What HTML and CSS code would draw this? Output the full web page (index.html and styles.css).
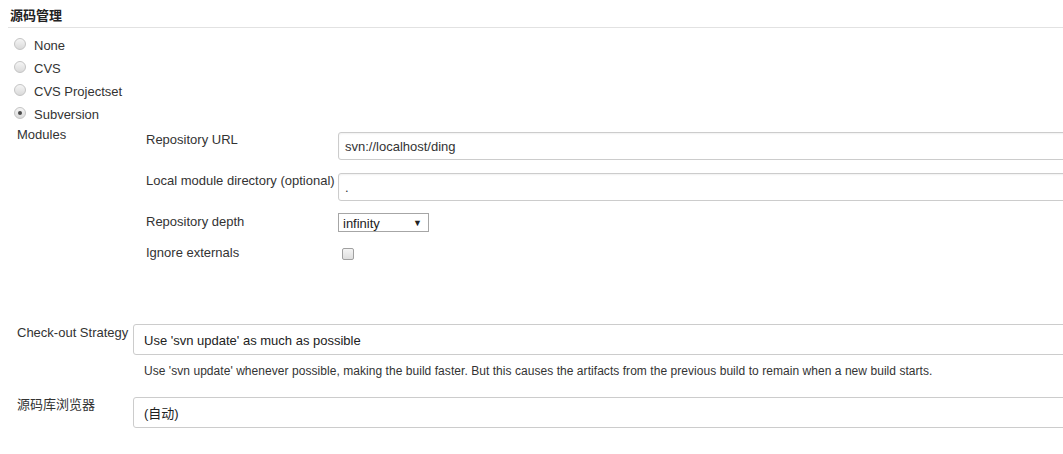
FILE: index.html
```html
<!DOCTYPE html>
<html lang="zh">
<head>
<meta charset="utf-8">
<title>源码管理</title>
<link rel="stylesheet" href="styles.css">
</head>
<body>
<div class="page">
  <div class="section-title">源码管理</div>
  <div class="scm-options">
    <div class="radio-row"><span class="radio"></span><span class="radio-label">None</span></div>
    <div class="radio-row"><span class="radio"></span><span class="radio-label">CVS</span></div>
    <div class="radio-row"><span class="radio"></span><span class="radio-label">CVS Projectset</span></div>
    <div class="radio-row"><span class="radio checked"></span><span class="radio-label">Subversion</span></div>
  </div>
  <div class="modules">
    <div class="modules-label">Modules</div>
    <div class="modules-inner">
      <div class="field-row">
        <div class="field-label">Repository URL</div>
        <div class="field-control"><div class="text-input">svn://localhost/ding</div></div>
      </div>
      <div class="field-row">
        <div class="field-label">Local module directory (optional)</div>
        <div class="field-control"><div class="text-input">.</div></div>
      </div>
      <div class="field-row">
        <div class="field-label">Repository depth</div>
        <div class="field-control"><div class="select-small"><span>infinity</span><span class="arrow">&#9660;</span></div></div>
      </div>
      <div class="field-row">
        <div class="field-label">Ignore externals</div>
        <div class="field-control"><span class="checkbox"></span></div>
      </div>
    </div>
  </div>
  <div class="strategy-row">
    <div class="row-label">Check-out Strategy</div>
    <div class="row-control">
      <div class="big-select">Use 'svn update' as much as possible</div>
      <div class="help">Use 'svn update' whenever possible, making the build faster. But this causes the artifacts from the previous build to remain when a new build starts.</div>
    </div>
  </div>
  <div class="browser-row">
    <div class="row-label">源码库浏览器</div>
    <div class="row-control">
      <div class="big-select">(自动)</div>
    </div>
  </div>
</div>
</body>
</html>
```

FILE: styles.css
```css
html, body {
  margin: 0;
  padding: 0;
  background: #fff;
}
body {
  font-family: "Liberation Sans", Arial, "Noto Sans CJK SC", sans-serif;
  font-size: 13px;
  color: #333;
  overflow: hidden;
}
.page {
  width: 1100px;
}
.section-title {
  margin-left: 8px;
  padding: 8px 0 4px 2px;
  line-height: 15px;
  font-weight: bold;
  font-size: 13px;
  color: #222;
  border-bottom: 1px solid #e2e2e2;
}
.scm-options {
  padding: 5px 0 0 14px;
}
.radio-row {
  display: flex;
  align-items: center;
  height: 23px;
}
.radio {
  width: 12px;
  height: 12px;
  box-sizing: border-box;
  border: 1px solid #c4c4c4;
  border-radius: 50%;
  background: linear-gradient(#f5f5f5, #dadada);
  margin-right: 8px;
  display: flex;
  align-items: center;
  justify-content: center;
  margin-top: -1px;
}
.radio.checked::after {
  content: "";
  width: 4px;
  height: 4px;
  border-radius: 50%;
  background: #4a4a4a;
}
.radio-label {
  line-height: 16px;
  padding-top: 3px;
}
.modules {
  display: flex;
  padding-left: 17px;
  margin-top: 1px;
}
.modules-label {
  width: 129px;
  line-height: 16px;
  padding-top: 1px;
  flex: none;
}
.modules-inner {
  flex: 1;
  padding-top: 5px;
}
.field-row {
  display: flex;
  margin-bottom: 12px;
}
.field-row:last-child {
  margin-bottom: 0;
}
.field-label {
  width: 192px;
  flex: none;
  line-height: 16px;
  padding-top: 1px;
  white-space: nowrap;
}
.field-control {
  flex: 1;
}
.text-input {
  margin-top: 1px;
  height: 28px;
  box-sizing: border-box;
  border: 1px solid #ccc;
  border-radius: 3px;
  box-shadow: inset 0 1px 2px rgba(0,0,0,0.06);
  padding: 1px 6px 0;
  line-height: 26px;
  color: #333;
}
.select-small {
  width: 91px;
  height: 19px;
  box-sizing: border-box;
  border: 1px solid #a6a6a6;
  background: #fff;
  display: flex;
  align-items: center;
  justify-content: space-between;
  padding: 1px 6px 0 4px;
  line-height: 17px;
  color: #222;
}
.select-small .arrow {
  font-size: 9px;
  color: #222;
}
.checkbox {
  display: block;
  margin: 4px 0 0 4px;
  width: 12px;
  height: 12px;
  box-sizing: border-box;
  border: 1px solid #a0a0a0;
  border-radius: 2px;
  background: linear-gradient(#f4f4f4, #dedede);
}
.strategy-row,
.browser-row {
  display: flex;
  padding-left: 17px;
}
.strategy-row {
  margin-top: 63px;
}
.browser-row {
  margin-top: 17px;
}
.row-label {
  width: 116px;
  flex: none;
  line-height: 16px;
  padding-top: 1px;
}
.row-control {
  flex: 1;
}
.big-select {
  height: 31px;
  box-sizing: border-box;
  border: 1px solid #ccc;
  border-radius: 3px;
  padding: 1px 10px 0;
  line-height: 29px;
  color: #222;
}
.browser-row .big-select {
  margin-top: 1px;
}
.help {
  margin-top: 7px;
  padding: 1px 0 0 11px;
  font-size: 12px;
  line-height: 16px;
  letter-spacing: 0.05px;
  color: #333;
  white-space: nowrap;
}
```
